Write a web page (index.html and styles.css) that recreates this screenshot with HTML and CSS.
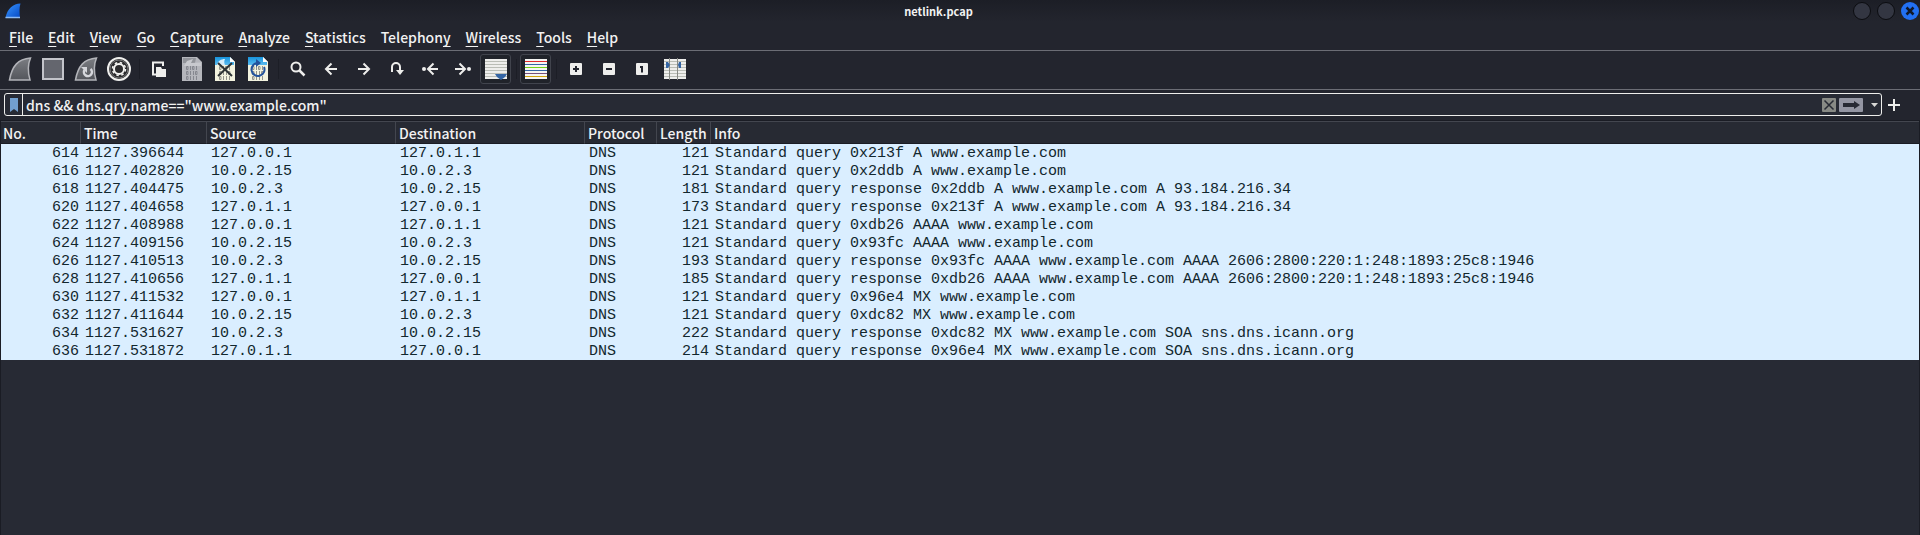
FILE: index.html
```
<!DOCTYPE html>
<html lang="en">
<head>
<meta charset="utf-8">
<title>netlink.pcap</title>
<link rel="stylesheet" href="styles.css">
</head>
<body>
<svg class="defs" aria-hidden="true">
  <defs>
    <linearGradient id="blue" x1="0" y1="0" x2="1" y2="1"><stop offset="0" stop-color="#3a97ff"/><stop offset="1" stop-color="#0347c4"/></linearGradient>
    <linearGradient id="grey" x1="0" y1="0" x2="0" y2="1"><stop offset="0" stop-color="#7b7d82"/><stop offset="1" stop-color="#54565c"/></linearGradient>
    <linearGradient id="sky" x1="0" y1="0" x2="0" y2="1"><stop offset="0" stop-color="#1793dc"/><stop offset="1" stop-color="#5cbcf0"/></linearGradient>
    <g id="bits" fill="none" stroke-width="1">
      <path d="M6.500 9.500h1.500v3h-1.500zM10.500 9v4M12.500 9.500h1.500v3h-1.500zM16.500 9v4M6.500 14.500h1.500v3h-1.500zM10.500 14v4M13.500 14v4M15.500 14.500h1.500v3h-1.500zM6.500 19.500h1.500v3h-1.500zM10.500 19v4M13.500 19v4M16.500 19v4"/>
    </g>
  </defs>
</svg>
<div class="window">
  <header class="titlebar">
    <svg class="app-icon" viewBox="0 0 24 22"><path d="M5.500 18C7.500 8 13 4 20.500 3.500C19 8 19.500 13 20 18z" fill="url(#blue)"/><path d="M5.500 17.500h14.500" stroke="#8ebcf5" stroke-width="1.500"/></svg>
    <h1 class="title">netlink.pcap</h1>
    <div class="controls">
      <button class="control" aria-label="Minimize"></button>
      <button class="control" aria-label="Maximize"></button>
      <button class="control close" aria-label="Close"><svg viewBox="0 0 18 18"><path d="M5.500 5.500l7 7M12.500 5.500l-7 7" stroke="#101828" stroke-width="2.500"/></svg></button>
    </div>
  </header>
  <nav class="menubar">
    <button class="menu"><u>F</u>ile</button>
    <button class="menu"><u>E</u>dit</button>
    <button class="menu"><u>V</u>iew</button>
    <button class="menu"><u>G</u>o</button>
    <button class="menu"><u>C</u>apture</button>
    <button class="menu"><u>A</u>nalyze</button>
    <button class="menu"><u>S</u>tatistics</button>
    <button class="menu">Telephon<u>y</u></button>
    <button class="menu"><u>W</u>ireless</button>
    <button class="menu"><u>T</u>ools</button>
    <button class="menu"><u>H</u>elp</button>
  </nav>
  <div class="toolbar" role="toolbar">
    <button class="tool" aria-label="Start capture"><svg viewBox="0 0 24 24"><path d="M1.500 23C4 9 10 2 22.500 1C19.500 8 20 16 22 23z" fill="url(#grey)" stroke="#b3b4b9" stroke-width="1.500"/></svg></button>
    <button class="tool" aria-label="Stop capture"><svg viewBox="0 0 24 24"><path d="M2 2h20v20H2z" fill="#64666e" stroke="#c3c4ca" stroke-width="2"/></svg></button>
    <button class="tool" aria-label="Restart capture"><svg viewBox="0 0 24 24"><path d="M1.500 23C4 9 10 2 22.500 1C19.500 8 20 16 22 23z" fill="url(#grey)" stroke="#b3b4b9" stroke-width="1.500"/><path d="M16.500 12a4 4 0 1 1-6 1" fill="none" stroke="#d6d7dc" stroke-width="2.500"/><path d="M7 10h6v6z" fill="#d6d7dc"/></svg></button>
    <button class="tool" aria-label="Capture options"><svg viewBox="0 0 24 24"><circle cx="12" cy="12" r="11" fill="#2b2b2d" stroke="#f0f0ee" stroke-width="2"/><circle cx="12" cy="12" r="9" fill="none" stroke="#77787a"/><circle cx="12" cy="12" r="5" fill="none" stroke="#f4f4f2" stroke-width="2"/><circle cx="12" cy="12" r="6.500" fill="none" stroke="#f4f4f2" stroke-width="1.500" stroke-dasharray="2.500 2.600"/></svg></button>
    <span class="sep"></span>
    <button class="tool" aria-label="Open"><svg viewBox="0 0 24 24"><path d="M9 17.500H6v-12h10V9" fill="none" stroke="#eeeeec" stroke-width="2"/><path d="M9 10h5l1 2h4v8H9z" fill="#eeeeec"/></svg></button>
    <button class="tool" aria-label="Save"><svg viewBox="0 0 24 24"><path d="M2 0h15l5 5v19H2z" fill="#b5b6bc"/><path d="M3 1h13l-1 5H3z" fill="#92949a"/><path d="M7 4l6-2-2 4 10-.5V9H4z" fill="#c8c9ce"/><use href="#bits" stroke="#85878f"/></svg></button>
    <button class="tool" aria-label="Close file"><svg viewBox="0 0 24 24"><path d="M2 0h15l5 5v19H2z" fill="#f3f3df"/><path d="M2 0h15l4 5v3H2z" fill="url(#sky)"/><path d="M4 8c1-4 4-6 8-6-1 2-1 4 0 6z" fill="#d4ecfa"/><path d="M17 0l5 5h-5z" fill="#fff"/><use href="#bits" stroke="#92938b"/><path d="M5 6l14 13M19 6L5 19" stroke="#2d3335" stroke-width="2"/></svg></button>
    <button class="tool" aria-label="Reload"><svg viewBox="0 0 24 24"><path d="M2 0h15l5 5v19H2z" fill="#f3f3df"/><path d="M2 0h15l4 5v3H2z" fill="url(#sky)"/><path d="M17 0l5 5h-5z" fill="#fff"/><use href="#bits" stroke="#92938b"/><path d="M18 10a6.500 6.500 0 1 1-6-4" fill="none" stroke="#23539c" stroke-width="2"/><path d="M10 2l5 4-5 4z" fill="#23539c"/></svg></button>
    <span class="sep"></span>
    <button class="tool" aria-label="Find packet"><svg viewBox="0 0 24 24"><circle cx="10" cy="10" r="4.500" fill="none" stroke="#eeeeec" stroke-width="2"/><path d="M13.500 13.500l5 5" stroke="#eeeeec" stroke-width="2.500"/></svg></button>
    <button class="tool" aria-label="Previous packet"><svg viewBox="0 0 24 24"><path d="M18 12H8M12.500 6.500L7 12l5.500 5.500" fill="none" stroke="#eeeeec" stroke-width="2"/></svg></button>
    <button class="tool" aria-label="Next packet"><svg viewBox="0 0 24 24"><path d="M6 12h10M11.500 6.500L17 12l-5.500 5.500" fill="none" stroke="#eeeeec" stroke-width="2"/></svg></button>
    <button class="tool" aria-label="Go to packet"><svg viewBox="0 0 24 24"><path d="M7 15V10a4 4 0 0 1 8 0v5" fill="none" stroke="#eeeeec" stroke-width="2"/><path d="M11 13h8l-4 5z" fill="#eeeeec"/></svg></button>
    <button class="tool" aria-label="First packet"><svg viewBox="0 0 24 24"><circle cx="6" cy="12" r="2" fill="#eeeeec"/><path d="M20 12h-9M15.500 6.500L10 12l5.500 5.500" fill="none" stroke="#eeeeec" stroke-width="2"/></svg></button>
    <button class="tool" aria-label="Last packet"><svg viewBox="0 0 24 24"><circle cx="18" cy="12" r="2" fill="#eeeeec"/><path d="M4 12h9M8.500 6.500L14 12l-5.500 5.500" fill="none" stroke="#eeeeec" stroke-width="2"/></svg></button>
    <button class="tool pressed" aria-label="Auto scroll"><svg viewBox="0 0 24 24"><path d="M1 2h22v20H1z" fill="#eeeeec"/><path d="M1 4.500h22M1 7.500h22M1 10.500h22M1 13.500h22M1 16.500h22M1 19.500h22" stroke="#babdb6"/><path d="M11 17h12l-2 3-4 3-4-3z" fill="#3465a4"/></svg></button>
    <span class="sep"></span>
    <button class="tool pressed" aria-label="Colorize"><svg viewBox="0 0 24 24"><path d="M1 2h22v20H1z" fill="#f5f5f3"/><path d="M1 4.500h22" stroke="#e02b2b"/><path d="M1 7.500h22M1 13.500h22" stroke="#3465a4"/><path d="M1 10.500h22" stroke="#73d216"/><path d="M1 16.500h22" stroke="#75507b"/><path d="M1 19.500h22" stroke="#d0a30c"/></svg></button>
    <span class="sep"></span>
    <button class="tool" aria-label="Zoom in"><svg viewBox="0 0 24 24"><rect x="6" y="6" width="12" height="12" rx="1" fill="#eeeeec"/><path d="M9 12h6M12 9v6" stroke="#23252e" stroke-width="2"/></svg></button>
    <button class="tool" aria-label="Zoom out"><svg viewBox="0 0 24 24"><rect x="6" y="6" width="12" height="12" rx="1" fill="#eeeeec"/><path d="M9 12h6" stroke="#23252e" stroke-width="2"/></svg></button>
    <button class="tool" aria-label="Normal size"><svg viewBox="0 0 24 24"><rect x="6" y="6" width="12" height="12" rx="1" fill="#eeeeec"/><path d="M10 10h2v5.500" fill="none" stroke="#23252e" stroke-width="2"/></svg></button>
    <button class="tool" aria-label="Resize columns"><svg viewBox="0 0 24 24"><path d="M1 2h22v20H1z" fill="#eeeeec"/><path d="M1 4.500h22M1 7.500h22M1 10.500h22M1 13.500h22M1 16.500h22M1 19.500h22" stroke="#babdb6"/><path d="M6.500 1v22M14.500 1v22" stroke="#888a85"/><path d="M3 5h2l2 3-2 3H3zM18 5h-2l-1 3 1 3h2z" fill="#3465a4"/></svg></button>
  </div>
  <form class="filterbar">
    <div class="filter">
      <button type="button" class="bookmark" aria-label="Filter bookmarks"><svg viewBox="0 0 8 14"><path d="M0 0h8v14l-4-3-4 3z" fill="#729fcf"/></svg></button>
      <input class="filter-input" type="text" aria-label="Display filter" spellcheck="false" value='dns &amp;&amp; dns.qry.name=="www.example.com"'>
      <button type="button" class="clear" aria-label="Clear"><svg viewBox="0 0 14 14"><path d="M2.500 2.500l9 9M11.500 2.500l-9 9" stroke="#272a34" stroke-width="1.500"/></svg></button>
      <button type="button" class="apply" aria-label="Apply"><svg viewBox="0 0 24 14"><path d="M4 5h11V3l6 4-6 4V9H4z" fill="#272a34"/></svg></button>
      <button type="button" class="recent" aria-label="Recent filters"><svg viewBox="0 0 7 4"><path d="M0 0h7L3.500 4z" fill="#d8d8d6"/></svg></button>
    </div>
    <button type="button" class="add" aria-label="Add filter button"><svg viewBox="0 0 12 12"><path d="M0 6h12M6 0v12" stroke="#eeeeec" stroke-width="2"/></svg></button>
  </form>
  <main class="packets">
    <table>
      <colgroup><col class="c-no"><col class="c-time"><col class="c-addr"><col class="c-addr"><col class="c-proto"><col class="c-len"><col></colgroup>
      <thead><tr><th>No.</th><th>Time</th><th>Source</th><th>Destination</th><th>Protocol</th><th>Length</th><th>Info</th></tr></thead>
      <tbody>
        <tr><td>614</td><td>1127.396644</td><td>127.0.0.1</td><td>127.0.1.1</td><td>DNS</td><td>121</td><td>Standard query 0x213f A www.example.com</td></tr>
        <tr><td>616</td><td>1127.402820</td><td>10.0.2.15</td><td>10.0.2.3</td><td>DNS</td><td>121</td><td>Standard query 0x2ddb A www.example.com</td></tr>
        <tr><td>618</td><td>1127.404475</td><td>10.0.2.3</td><td>10.0.2.15</td><td>DNS</td><td>181</td><td>Standard query response 0x2ddb A www.example.com A 93.184.216.34</td></tr>
        <tr><td>620</td><td>1127.404658</td><td>127.0.1.1</td><td>127.0.0.1</td><td>DNS</td><td>173</td><td>Standard query response 0x213f A www.example.com A 93.184.216.34</td></tr>
        <tr><td>622</td><td>1127.408988</td><td>127.0.0.1</td><td>127.0.1.1</td><td>DNS</td><td>121</td><td>Standard query 0xdb26 AAAA www.example.com</td></tr>
        <tr><td>624</td><td>1127.409156</td><td>10.0.2.15</td><td>10.0.2.3</td><td>DNS</td><td>121</td><td>Standard query 0x93fc AAAA www.example.com</td></tr>
        <tr><td>626</td><td>1127.410513</td><td>10.0.2.3</td><td>10.0.2.15</td><td>DNS</td><td>193</td><td>Standard query response 0x93fc AAAA www.example.com AAAA 2606:2800:220:1:248:1893:25c8:1946</td></tr>
        <tr><td>628</td><td>1127.410656</td><td>127.0.1.1</td><td>127.0.0.1</td><td>DNS</td><td>185</td><td>Standard query response 0xdb26 AAAA www.example.com AAAA 2606:2800:220:1:248:1893:25c8:1946</td></tr>
        <tr><td>630</td><td>1127.411532</td><td>127.0.0.1</td><td>127.0.1.1</td><td>DNS</td><td>121</td><td>Standard query 0x96e4 MX www.example.com</td></tr>
        <tr><td>632</td><td>1127.411644</td><td>10.0.2.15</td><td>10.0.2.3</td><td>DNS</td><td>121</td><td>Standard query 0xdc82 MX www.example.com</td></tr>
        <tr><td>634</td><td>1127.531627</td><td>10.0.2.3</td><td>10.0.2.15</td><td>DNS</td><td>222</td><td>Standard query response 0xdc82 MX www.example.com SOA sns.dns.icann.org</td></tr>
        <tr><td>636</td><td>1127.531872</td><td>127.0.1.1</td><td>127.0.0.1</td><td>DNS</td><td>214</td><td>Standard query response 0x96e4 MX www.example.com SOA sns.dns.icann.org</td></tr>
      </tbody>
    </table>
  </main>
</div>
</body>
</html>
```
FILE: styles.css
```
* { box-sizing: border-box; }

body {
  margin: 0;
  background: #23252e;
  color: #f2f2f2;
  font: 500 14px/20px "Noto Sans CJK SC", "Noto Sans", sans-serif;
}

button {
  margin: 0;
  padding: 0;
  border: 0;
  background: none;
  color: inherit;
  font: inherit;
}

svg { display: block; }
.defs { position: absolute; width: 0; height: 0; }

.window {
  display: flex;
  flex-direction: column;
  min-height: 100vh;
}

.titlebar {
  display: flex;
  height: 22px;
  background: linear-gradient(#1c1e26, #23252e);
}
.app-icon { width: 24px; height: 22px; }
.title {
  flex: 1;
  margin: 0;
  text-align: center;
  font-size: 11px;
  line-height: 22px;
  font-weight: 700;
}
.controls {
  display: flex;
  align-items: center;
  gap: 6px;
  padding-right: 1px;
}
.control {
  width: 18px;
  height: 18px;
  border: 1px solid #0b0c10;
  border-radius: 50%;
  background: #333642;
}
.control.close { border: 0; background: #2270f2; }

.menubar {
  display: flex;
  gap: 15px;
  height: 29px;
  padding: 5px 9px 0;
  border-bottom: 1px solid #6b6d75;
}
.menu { height: 20px; white-space: nowrap; }
.menu u { text-underline-offset: 3px; text-decoration-thickness: 1px; }

.toolbar {
  display: flex;
  align-items: center;
  height: 39px;
  padding: 0 3px 2px;
  border-bottom: 1px solid #6b6d75;
}
.tool {
  display: grid;
  place-items: center;
  width: 33px;
  height: 30px;
}
.tool svg { width: 24px; height: 24px; }
.tool.pressed {
  width: 31px;
  margin: 0 1px;
  border: 1px solid #41444d;
  border-radius: 3px;
  background: #20232a;
}
.sep {
  width: 7px;
  height: 20px;
  background: linear-gradient(#1c1e26, #1c1e26) 4px 0 / 1px 100% no-repeat;
}

.filterbar {
  display: flex;
  align-items: center;
  gap: 6px;
  height: 30px;
  padding: 0 20px 1px 4px;
}
.filter {
  display: flex;
  flex: 1;
  align-items: center;
  height: 23px;
  border: 1px solid #eeeeec;
  border-radius: 3px;
  background: #272a34;
}
.bookmark {
  display: grid;
  place-items: center;
  width: 18px;
  height: 21px;
  border-right: 1px solid #eeeeec;
}
.bookmark svg { width: 8px; height: 14px; }
.filter-input {
  flex: 1;
  min-width: 0;
  height: 21px;
  padding: 0 3px;
  border: 0;
  outline: 0;
  background: none;
  color: #f2f2f2;
  font: inherit;
}
.clear { width: 14px; height: 14px; margin-right: 3px; border-radius: 1px; background: #888a85; }
.apply { width: 24px; height: 14px; margin-right: 8px; border-radius: 1px; background: #9496a3; }
.recent { width: 7px; margin-right: 3px; }
.add { width: 12px; height: 12px; }

.packets {
  flex: 1;
  border: 1px solid #1a1c24;
  border-bottom: 0;
  background: #272a34;
}
table {
  width: 100%;
  table-layout: fixed;
  border-collapse: separate;
  border-spacing: 0;
}
.c-no { width: 80px; }
.c-time { width: 126px; }
.c-addr { width: 189px; }
.c-proto { width: 72px; }
.c-len { width: 54px; }
th {
  height: 23px;
  padding: 0 0 0 3px;
  border-top: 1px solid #43464f;
  border-right: 1px solid #43464f;
  border-bottom: 1px solid #1a1c24;
  background: #272a33;
  text-align: left;
  font-weight: 500;
  line-height: 20px;
  white-space: nowrap;
}
th:first-child { padding-left: 2px; }
th:last-child { border-right: 0; }
td {
  height: 18px;
  padding: 2px 2px 0 4px;
  background: #daeeff;
  color: #12272e;
  font: 15px/16px "Liberation Mono", monospace;
  white-space: nowrap;
}
td:nth-child(1), td:nth-child(6) { text-align: right; }
```
